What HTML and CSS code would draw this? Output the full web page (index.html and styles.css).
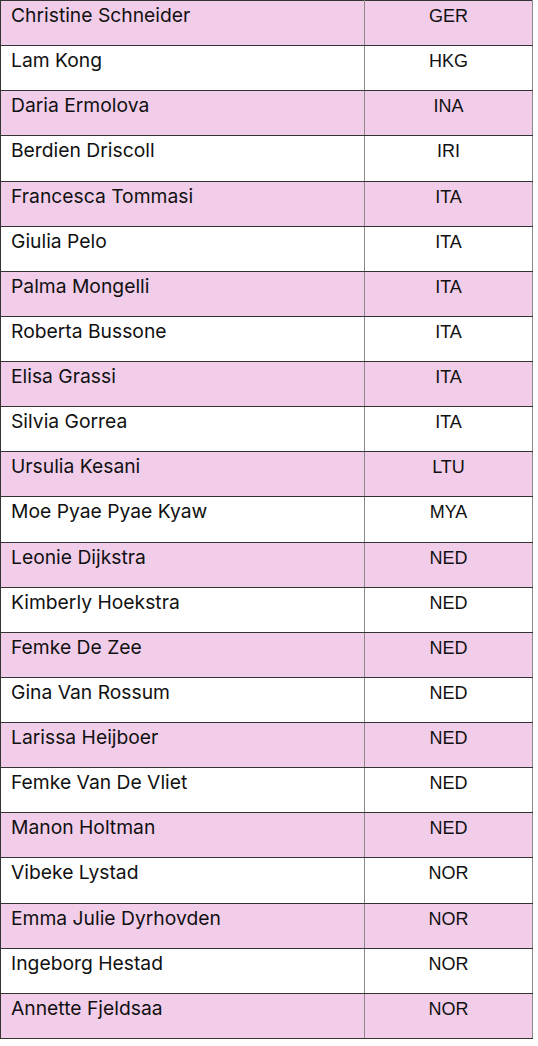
FILE: index.html
```html
<!DOCTYPE html>
<html>
<head>
<meta charset="utf-8">
<link rel="stylesheet" href="styles.css">
</head>
<body>
<table class="roster">
<tbody>
<tr class="pink"><td class="name">Christine Schneider</td><td class="cc">GER</td></tr>
<tr><td class="name">Lam Kong</td><td class="cc">HKG</td></tr>
<tr class="pink"><td class="name">Daria Ermolova</td><td class="cc">INA</td></tr>
<tr><td class="name">Berdien Driscoll</td><td class="cc">IRI</td></tr>
<tr class="pink"><td class="name">Francesca Tommasi</td><td class="cc">ITA</td></tr>
<tr><td class="name">Giulia Pelo</td><td class="cc">ITA</td></tr>
<tr class="pink"><td class="name">Palma Mongelli</td><td class="cc">ITA</td></tr>
<tr><td class="name">Roberta Bussone</td><td class="cc">ITA</td></tr>
<tr class="pink"><td class="name">Elisa Grassi</td><td class="cc">ITA</td></tr>
<tr><td class="name">Silvia Gorrea</td><td class="cc">ITA</td></tr>
<tr class="pink"><td class="name">Ursulia Kesani</td><td class="cc">LTU</td></tr>
<tr><td class="name">Moe Pyae Pyae Kyaw</td><td class="cc">MYA</td></tr>
<tr class="pink"><td class="name">Leonie Dijkstra</td><td class="cc">NED</td></tr>
<tr><td class="name">Kimberly Hoekstra</td><td class="cc">NED</td></tr>
<tr class="pink"><td class="name">Femke De Zee</td><td class="cc">NED</td></tr>
<tr><td class="name">Gina Van Rossum</td><td class="cc">NED</td></tr>
<tr class="pink"><td class="name">Larissa Heijboer</td><td class="cc">NED</td></tr>
<tr><td class="name">Femke Van De Vliet</td><td class="cc">NED</td></tr>
<tr class="pink"><td class="name">Manon Holtman</td><td class="cc">NED</td></tr>
<tr><td class="name">Vibeke Lystad</td><td class="cc">NOR</td></tr>
<tr class="pink"><td class="name">Emma Julie Dyrhovden</td><td class="cc">NOR</td></tr>
<tr><td class="name">Ingeborg Hestad</td><td class="cc">NOR</td></tr>
<tr class="pink"><td class="name">Annette Fjeldsaa</td><td class="cc">NOR</td></tr>
</tbody>
</table>
</body>
</html>
```
FILE: styles.css
```css
html, body {
  margin: 0;
  padding: 0;
  background: #ffffff;
}
.roster {
  border-collapse: collapse;
  width: 533px;
  table-layout: fixed;
}
.roster tr {
  height: 45.13px;
}
.roster tr.pink {
  background: #f1cdea;
}
.roster td {
  border-top: 1px solid #333333;
  border-bottom: 1px solid #333333;
  padding: 0;
  vertical-align: top;
  color: #111111;
}
.roster td.name {
  width: 353px;
  border-left: 1px solid #333333;
  border-right: 1px solid #8a8a8a;
  padding: 3px 0 0 10px;
  font-family: "Inter", "Liberation Sans", sans-serif;
  font-size: 19.3px;
  line-height: 23px;
}
.roster td.cc {
  border-right: 1px solid #8a8a8a;
  text-align: center;
  padding: 4px 0 0 0;
  font-family: "Liberation Sans", Arial, sans-serif;
  font-size: 18px;
  line-height: 22px;
}
```
